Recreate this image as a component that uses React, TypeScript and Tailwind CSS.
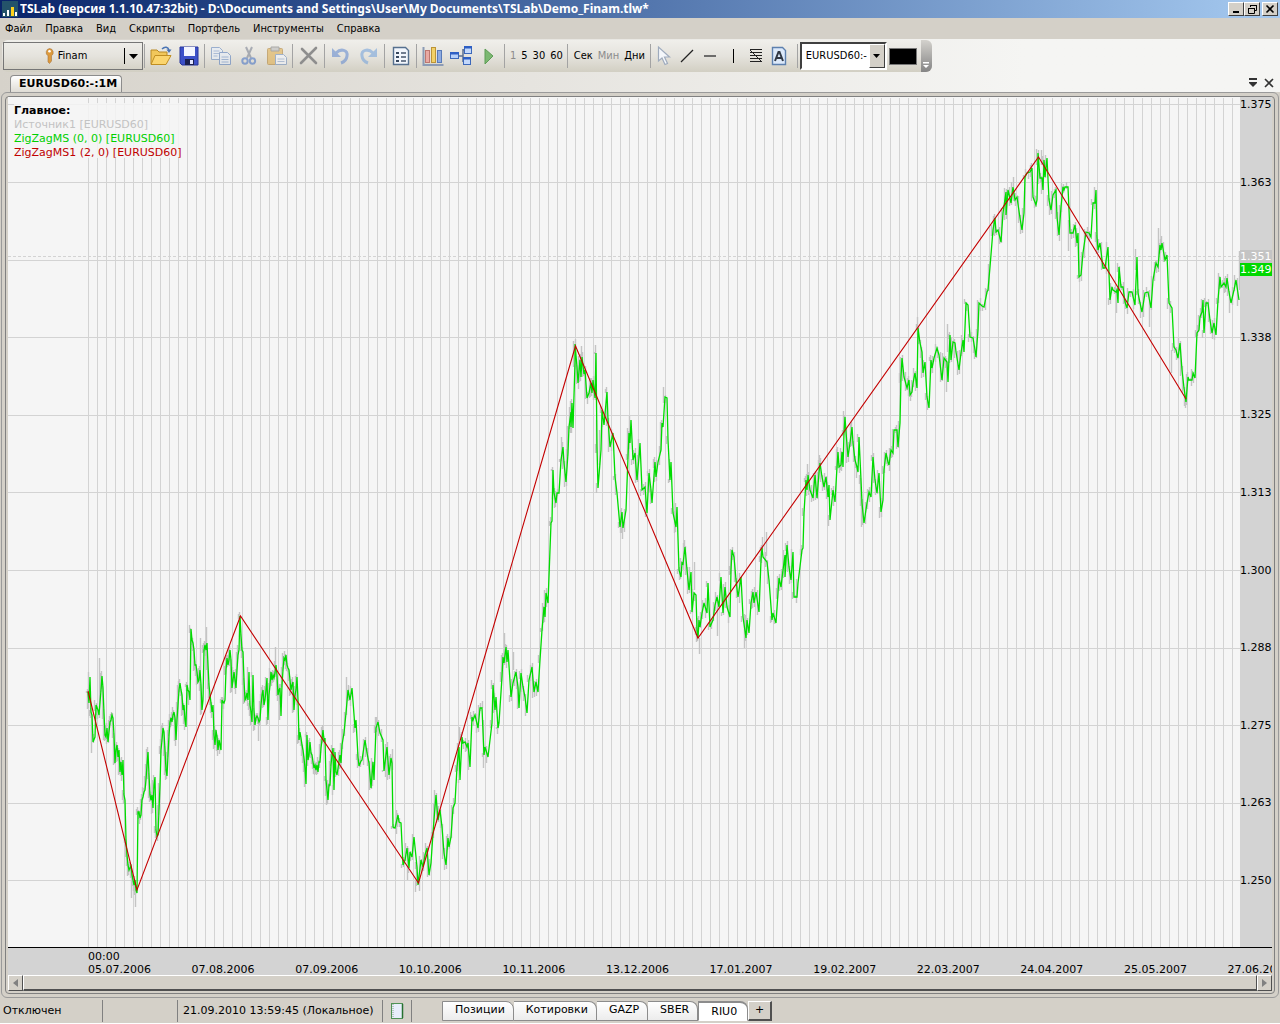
import React from 'react';

const MENU = ['Файл', 'Правка', 'Вид', 'Скрипты', 'Портфель', 'Инструменты', 'Справка'];

const PRICES = ['1.375', '1.363', '', '1.338', '1.325', '1.313', '1.300', '1.288', '1.275', '1.263', '1.250'];

const DATES = [
  '05.07.2006', '07.08.2006', '07.09.2006', '10.10.2006', '10.11.2006', '13.12.2006',
  '17.01.2007', '19.02.2007', '22.03.2007', '24.04.2007', '25.05.2007', '27.06.2007',
];

const SHEETS = ['Позиции', 'Котировки', 'GAZP', 'SBER', 'RIU0'];

const GRID_Y = [104, 182, 260, 337, 415, 492, 570, 648, 725, 803, 880];
const GRID_X = Array.from({ length: 128 }, (_, i) => 88 + i * 9 + (i >= 17 ? 1 : 0));

// x,y pairs of the close price
const SERIES = `88,692 89,703 90,677 91,712 92,715 93,742 95,737 96,705 98,710 99,715 101,690 102,676 103,688 104,713 105,735 106,737 107,728
108,742 110,722 111,720 112,715 113,718 114,735 115,763 116,750 117,745 118,757 119,750 120,772 121,762 122,775 123,760 124,795 125,800
126,840 127,855 128,865 129,870 130,868 131,866 132,875 133,880 134,885 135,880 136,890 137,893 138,812 139,812 140,818 141,815 142,800
143,797 144,792 145,790 146,780 147,765 148,752 149,775 150,795 151,800 152,795 153,808 154,785 155,777 156,830 157,836 158,835 159,810
160,785 161,750 162,740 163,728 164,732 165,750 166,770 167,776 168,755 169,735 170,722 171,718 172,722 173,715 174,712 175,718 176,740
177,720 178,705 179,690 180,683 181,690 182,695 183,710 184,705 185,720 186,727 187,685 188,690 189,692 190,700 191,629 192,640 193,643
194,650 195,665 196,665 197,672 198,682 199,680 200,670 201,685 202,710 203,700 204,650 205,645 206,650 207,643 208,665 209,685 210,695
211,703 212,712 213,705 214,735 215,745 216,730 217,737 218,750 219,740 220,745 221,750 222,700 223,702 224,703 225,700 226,670 227,658
228,665 229,660 230,650 231,660 232,688 233,680 234,672 235,680 236,688 237,670 238,655 239,650 240,616 241,635 242,650 243,652 244,680
245,700 246,698 247,693 248,700 249,672 250,705 251,712 252,722 253,675 254,710 255,725 256,718 257,716 258,718 259,722 260,720 261,705
262,695 263,690 264,705 265,700 266,690 267,678 268,720 269,695 270,685 271,672 272,680 273,675 274,678 275,673 276,665 277,675 278,695
279,690 280,688 281,716 282,685 283,670 284,658 285,660 286,655 287,665 288,668 289,670 290,680 291,690 292,685 293,682 294,710 295,695
296,690 297,677 298,700 299,740 300,732 301,738 302,745 303,750 304,758 305,768 306,784 307,735 308,760 309,755 310,742 311,753 312,755
313,762 314,768 315,765 316,770 317,765 318,772 319,762 320,762 321,748 322,740 323,730 324,740 325,738 326,780 327,790 328,800 329,785
330,785 331,765 332,755 333,748 334,790 335,752 336,772 337,775 340,755 341,763 342,745 344,733 346,713 348,690 350,700 352,688 355,728
356,720 358,757 359,766 361,761 362,760 365,740 367,753 369,763 371,788 373,762 374,780 376,728 378,722 380,733 383,740 384,771 387,747
389,775 391,758 392,763 393,827 395,828 398,815 399,822 401,823 403,865 405,860 407,848 409,868 410,852 412,857 414,837 417,867 418,885
421,860 423,867 425,855 427,848 429,875 431,863 433,833 435,807 436,795 438,820 440,810 442,827 444,853 446,865 448,838 449,847 451,837
453,808 455,803 457,767 459,747 460,780 462,737 463,743 465,742 467,747 468,743 470,767 472,717 473,720 475,715 478,728 480,708 482,708
484,755 485,747 488,757 492,723 493,685 495,710 496,697 498,728 499,723 502,677 503,657 504,663 506,647 507,662 508,650 511,697 513,683
516,672 518,687 519,708 521,673 523,687 525,697 527,713 529,680 532,667 534,692 536,682 538,692 540,660 542,630 544,607 545,617 546,593
548,603 551,523 552,521 553,470 554,493 556,503 557,493 559,493 561,460 563,447 564,463 566,482 568,453 569,427 571,412 571,427 572,403
573,428 575,363 575,344 577,367 578,383 580,360 581,377 582,357 584,374 585,370 587,398 589,393 591,383 592,393 593,380 595,398 596,353
597,447 598,488 601,450 602,410 604,425 607,392 608,420 610,447 613,433 615,477 617,493 620,527 622,512 623,528 626,510 628,457 629,433
630,443 631,420 633,460 635,453 637,480 639,457 640,443 642,490 645,487 647,513 649,473 651,490 652,503 655,462 656,477 658,462 661,450
662,423 663,427 665,397 667,398 668,440 670,480 671,462 673,513 676,527 677,507 679,570 681,577 682,563 683,564 685,547 687,570 689,590
691,572 692,612 694,593 696,595 697,630 698,638 699,620 700,627 702,613 704,603 707,613 708,583 710,627 713,620 715,605 717,597 719,607
721,577 723,613 725,587 727,607 730,617 731,570 732,550 734,557 736,580 738,597 741,577 743,617 746,638 747,620 749,633 751,603 753,592
754,603 756,592 759,612 761,560 762,548 763,557 767,562 769,580 772,620 773,613 776,623 778,593 779,578 781,587 783,570 785,555 785,577
787,545 789,567 791,580 793,552 794,597 797,597 798,583 802,550 803,548 804,513 806,480 807,490 808,475 810,490 813,498 815,475 817,498
819,473 820,463 822,477 824,487 826,477 828,497 829,485 830,520 833,490 835,502 837,467 838,452 839,467 841,465 842,452 843,467 844,433
845,417 846,432 848,457 850,443 852,427 853,443 855,460 857,467 858,472 859,437 861,480 862,503 864,523 867,503 869,492 871,497 873,457
875,480 877,493 879,473 881,512 883,500 884,470 886,453 888,462 889,465 891,450 893,453 894,430 897,430 898,447 900,423 901,377 902,358
904,377 907,388 909,380 910,395 912,392 913,383 915,373 917,388 918,328 920,343 922,352 923,373 925,362 927,397 929,408 931,360 932,368
934,358 937,348 939,355 942,380 944,358 947,362 948,382 950,335 951,360 953,342 955,343 956,352 959,370 961,353 963,340 964,352 966,303
968,305 970,337 973,338 975,350 976,357 978,330 979,303 982,306 984,307 987,292 988,290 990,267 993,230 995,218 996,232 998,230 1001,242
1003,213 1006,192 1006,215 1008,190 1011,203 1013,187 1015,200 1017,197 1020,218 1022,230 1024,213 1025,177 1027,173 1030,172 1032,168
1033,197 1036,205 1037,200 1038,153 1040,178 1042,178 1043,190 1044,160 1045,177 1047,158 1049,200 1051,210 1053,195 1056,190 1057,217
1059,235 1061,207 1063,187 1064,190 1065,187 1068,187 1070,233 1073,233 1075,225 1077,243 1078,233 1079,277 1081,275 1083,253 1086,232
1089,233 1091,237 1093,203 1095,203 1096,190 1097,237 1098,250 1100,243 1103,268 1105,268 1108,247 1110,300 1112,287 1113,290 1116,292
1117,290 1118,303 1119,267 1121,287 1123,287 1125,302 1127,308 1129,292 1132,292 1135,305 1137,257 1138,293 1140,303 1142,312 1145,293
1148,292 1151,308 1153,280 1156,263 1158,267 1160,245 1161,250 1162,243 1165,260 1167,255 1169,303 1172,308 1174,347 1176,350 1178,358
1180,343 1182,370 1184,388 1186,402 1188,377 1189,380 1192,380 1193,373 1195,378 1197,333 1199,330 1200,317 1202,312 1203,300 1204,333
1206,303 1208,303 1210,320 1212,333 1214,323 1216,335 1218,300 1220,277 1221,287 1224,283 1226,287 1227,278 1229,292 1231,303 1234,290
1236,280 1239,300`;

const POINTS = SERIES.trim().split(/\s+/).map((p) => p.split(',').map(Number));

// High/low range of every bar
const BARS = POINTS.map(([x, y], i) => {
  const prev = i > 0 ? POINTS[i - 1][1] : y;
  const near = Math.abs(prev - y) < 30 ? prev : y;
  const top = Math.min(y, near) - 1 - ((i * 7) % 5);
  const bottom = Math.max(y, near) + 1 + ((i * 11) % 6);
  return `M${x - 1.5} ${top}V${bottom}`;
}).join('');

const SPIKES =
  'M99.5 658V700M91.5 725V753M135.5 890V907M131.5 875V898M190.5 628V680M206.5 627V650M200.5 638V670M258.5 722V741M275.5 647V665M346.5 677V705M375.5 717V740M392.5 749V770M415.5 880V892M407.5 860V880M459.5 727V740M482.5 701V708M483.5 720V768M504.5 633V650M513.5 652V670M561.5 437V460M581.5 346V365M595.5 345V400M596.5 420V453M599.5 430V465M622.5 525V539M663.5 387V400M684.5 540V550M694.5 562V590M699.5 638V654M717.5 610V636M744.5 638V648M762.5 537V550M766.5 532V556M807.5 464V475M819.5 455V465M843.5 411V420M861.5 500V527M917.5 317V335M947.5 324V352M946.5 365V392M1013.5 177V190M1036.5 149V165M1041.5 150V165M1068.5 220V251M1079.5 260V282M1116.5 300V313M1158.5 228V250M1161.5 236V248M1171.5 350V373M1149.5 305V327M1135.5 249V270M1185.5 395V408M1229.5 295V313M1239.5 251V290';

const Separator: React.FC = () => <span className="mx-px h-6 w-0.5 shrink-0 border-l border-[#a3a3a3]" />;

const ToolButton: React.FC<{ label: string; narrow?: boolean; children: React.ReactNode }> = ({ label, narrow, children }) => (
  <button aria-label={label} title={label} className={`flex h-7 shrink-0 items-center justify-center ${narrow ? 'w-[23px]' : 'w-7'}`}>
    {children}
  </button>
);

const Icon: React.FC<{ children: React.ReactNode; faded?: boolean }> = ({ children, faded }) => (
  <svg viewBox="0 0 22 22" fill="none" className={`h-[22px] w-[22px] ${faded ? 'opacity-55' : ''}`}>{children}</svg>
);

const TitleBar: React.FC = () => (
  <header className="flex h-[18px] shrink-0 items-center bg-linear-to-r from-[#0a246a] to-[#a6caf0] pr-[2px] pl-[2px] text-white">
    <svg viewBox="0 0 16 16" className="mr-0.5 h-4 w-4">
      <rect width="16" height="16" fill="#24536a" />
      <path d="M1 12h2v3H1zM5 9h2v6H5zM13 11h2v4h-2z" fill="#fff" />
      <path d="M9 6h3v9H9z" fill="#ffd21c" />
    </svg>
    <h1 className="flex-1 truncate font-['Noto_Sans','DejaVu_Sans',sans-serif] text-[12px] leading-4 font-bold">
      TSLab (версия 1.1.10.47:32bit) - D:\Documents and Settings\User\My Documents\TSLab\Demo_Finam.tlw*
    </h1>
    <div className="flex text-black">
      {['Свернуть', 'Восстановить', 'Закрыть'].map((name, i) => (
        <button
          key={name}
          aria-label={name}
          className={`flex h-[14px] w-4 items-center justify-center border border-t-white border-r-[#404040] border-b-[#404040] border-l-white bg-[#d4d0c8] ${i === 2 ? 'ml-0.5' : ''}`}
        >
          <svg viewBox="0 0 12 10" className="h-[10px] w-3 shrink-0" fill="none" stroke="currentColor">
            {i === 0 && <path d="M3 8h6" strokeWidth="2" />}
            {i === 1 && <path d="M4.500 3V1.500H10.500V6.500H8.500M4 1.500H11M2.500 4.500H8.500V9.500H2.500zM2 4.500H9" />}
            {i === 2 && <path d="M2.500 1.500l7 7M9.500 1.500l-7 7" strokeWidth="1.600" />}
          </svg>
        </button>
      ))}
    </div>
  </header>
);

const Toolbar: React.FC = () => (
  <div className="flex h-[34px] shrink-0 items-center pl-0.5 font-['DejaVu_Sans_Condensed','DejaVu_Sans',sans-serif] text-[11px]">
    <div className="flex h-8 items-center rounded-md bg-linear-to-b from-[#f0efeb] via-[#e5e3dd] to-[#d2cfc3] pl-px">
      <div className="flex h-7 w-[140px] items-center border border-[#767676]">
        <button className="flex flex-1 items-center justify-center gap-1 pl-1">
          <svg viewBox="0 0 9 16" className="h-4 w-[9px]">
            <path d="M4.500.5a4 4 0 0 1 2 7.300V13l-2 2.500-1.500-1.500V7.800a4 4 0 0 1 1.500-7.300z" fill="#dd9a3c" stroke="#a8743a" strokeWidth=".6" />
            <circle cx="4.500" cy="3.200" r="1.300" fill="#fff" />
          </svg>
          Finam
        </button>
        <button aria-label="Поставщики данных" className="flex h-4 w-[18px] items-center justify-center border-l border-black">
          <svg viewBox="0 0 9 5" className="h-[5px] w-[9px]"><path d="M0 0h9L4.500 5z" /></svg>
        </button>
      </div>
      <Separator />
      <ToolButton label="Открыть">
        <Icon>
          <path d="M1 19V5h6l2 2h8v4" fill="#f1c75b" stroke="#b98a24" />
          <path d="M1 19.500l4-9h16l-5 9z" fill="#fbd56e" stroke="#c08e22" />
          <path d="M12 4c3-3 6-2 7 1" stroke="#4a74b4" strokeWidth="1.500" />
          <path d="M16.500 4.500h5L19 8z" fill="#4a74b4" />
        </Icon>
      </ToolButton>
      <ToolButton label="Сохранить">
        <Icon>
          <path d="M2 2h18v18H4l-2-2z" fill="#3c50c8" stroke="#27349a" />
          <path d="M6 2h11v9H6z" fill="#f3f5ff" />
          <path d="M7 14h9v6H7z" fill="#1a2050" />
          <path d="M12 15h3v4h-3z" fill="#e0e4ff" />
        </Icon>
      </ToolButton>
      <Separator />
      <ToolButton label="Копировать">
        <Icon faded>
          <path d="M1.500 2.500h8l3 3v9h-11z" fill="#e6eefb" stroke="#5b81bd" />
          <path d="M3.500 6h6M3.500 8.500h6M3.500 11h4" stroke="#7b9bd0" />
          <path d="M9.500 7.500h8l3 3v9h-11z" fill="#e6eefb" stroke="#4c76ba" />
          <path d="M11.500 12h7M11.500 14.500h7M11.500 17h7" stroke="#6c90cc" />
        </Icon>
      </ToolButton>
      <ToolButton label="Вырезать">
        <Icon faded>
          <path d="M8 2l5 11M14 2L9 13" stroke="#737b8c" strokeWidth="2" />
          <circle cx="7" cy="16" r="2.700" stroke="#3f6ec4" strokeWidth="2" />
          <circle cx="14.500" cy="16" r="2.700" stroke="#3f6ec4" strokeWidth="2" />
        </Icon>
      </ToolButton>
      <ToolButton label="Вставить">
        <Icon faded>
          <rect x="1.500" y="3.500" width="15" height="16" rx="1" fill="#e0ab45" stroke="#ac7a28" />
          <path d="M5 2h8v4H5z" fill="#b8b8b8" stroke="#777" />
          <path d="M9.500 9.500h8l3 3v7h-11z" fill="#f5f8ff" stroke="#6888b8" />
          <path d="M11.500 14h7M11.500 16.500h7" stroke="#8ba5ce" />
        </Icon>
      </ToolButton>
      <Separator />
      <ToolButton label="Удалить">
        <Icon><path d="M4 4l14 14M18 3L3 18" stroke="#8e8e8e" strokeWidth="2.600" strokeLinecap="round" /></Icon>
      </ToolButton>
      <Separator />
      <ToolButton label="Отменить">
        <Icon faded>
          <path d="M6 8c5-5 12-3 11 3-.5 4-3 6-6 7" stroke="#5d86cf" strokeWidth="3" />
          <path d="M2 3v9h9z" fill="#5d86cf" />
        </Icon>
      </ToolButton>
      <ToolButton label="Повторить">
        <Icon faded>
          <path d="M15 8C10 3 3 5 4 11c.5 4 3 6 6 7" stroke="#6fa0dc" strokeWidth="3" />
          <path d="M19 3v9h-9z" fill="#6fa0dc" />
        </Icon>
      </ToolButton>
      <Separator />
      <ToolButton label="Свойства">
        <Icon>
          <path d="M3.500 2.500h12l3 3v14h-15z" fill="#f2f6fc" stroke="#56708f" strokeWidth="1.400" />
          <path d="M6 7h3v2H6zM6 11h3v2H6zM6 15h3v2H6z" fill="#37475e" />
          <path d="M11 8h5M11 12h5M11 16h5" stroke="#46566c" strokeWidth="1.400" />
        </Icon>
      </ToolButton>
      <Separator />
      <ToolButton label="График">
        <Icon>
          <path d="M1.500 2v18h20" stroke="#8c9bb5" strokeWidth="2" />
          <rect x="3.500" y="5.500" width="4" height="12" fill="#e9a9a3" stroke="#bd7770" />
          <rect x="9.500" y="2.500" width="4" height="15" fill="#f2d169" stroke="#bc9437" />
          <rect x="15.500" y="5.500" width="4" height="12" fill="#8fabe0" stroke="#587ab8" />
        </Icon>
      </ToolButton>
      <ToolButton label="Схема">
        <Icon>
          <path d="M8 11h5M13 4v13M13 5h3M13 17h3" stroke="#5b6f93" strokeWidth="1.500" />
          <rect x=".5" y="7.500" width="8" height="6" fill="#b6d0fa" stroke="#3c68ba" />
          <rect x="14.500" y="1.500" width="7" height="7" fill="#c3d8fb" stroke="#3c68ba" />
          <rect x="13.500" y="12.500" width="7" height="7" fill="#c3d8fb" stroke="#3c68ba" />
          <path d="M0 7h9v2.500H0zM14 1h8v2.500h-8zM13 12h8v2.500h-8z" fill="#2e5fc4" />
        </Icon>
      </ToolButton>
      <ToolButton label="Запустить">
        <Icon><path d="M7 4l8 7-8 8z" fill="#7cb872" stroke="#5d9c55" /></Icon>
      </ToolButton>
      <Separator />
      <div className="flex gap-[5px] px-[3px]">
        <button className="text-[#8c8c8c]">1</button>
        <button>5</button>
        <button>30</button>
        <button>60</button>
      </div>
      <Separator />
      <div className="flex gap-[5px] px-1">
        <button>Сек</button>
        <button className="text-[#8c8c8c]">Мин</button>
        <button>Дни</button>
      </div>
      <Separator />
      <ToolButton label="Курсор" narrow>
        <Icon><path d="M5.500 2v14l3.500-3 3 6.500 2.500-1-3-6.500h5z" fill="#f4f7fb" stroke="#9fabbd" strokeWidth="1.200" /></Icon>
      </ToolButton>
      <ToolButton label="Линия" narrow>
        <Icon><path d="M5 17L17 5" stroke="#222" strokeWidth="1.200" /></Icon>
      </ToolButton>
      <ToolButton label="Горизонтальная линия" narrow>
        <Icon><path d="M5 11h12" stroke="#444" strokeWidth="1.500" /></Icon>
      </ToolButton>
      <ToolButton label="Вертикальная линия" narrow>
        <Icon><path d="M11.500 4v14" stroke="#000" /></Icon>
      </ToolButton>
      <ToolButton label="Уровни" narrow>
        <Icon><path d="M5 4.500h12M5 7.500h12M5 10.500h12M5 13.500h12M5 16.500h12M5 5l12 12" stroke="#222" /></Icon>
      </ToolButton>
      <ToolButton label="Надпись" narrow>
        <Icon>
          <path d="M4.500 2.500h10l3 3v14h-13z" fill="#dce9fa" stroke="#5d80ae" strokeWidth="1.400" />
          <path d="M7 16l3.500-9h1L15 16M8.500 13h5" stroke="#303844" strokeWidth="2" />
        </Icon>
      </ToolButton>
      <span className="w-[5px]" />
      <Separator />
      <div className="relative h-7 w-[87px] border-2 border-t-[#404040] border-r-white border-b-white border-l-[#404040] bg-white">
        <select aria-label="Инструмент" className="h-full w-full appearance-none bg-white pr-4 pl-1 outline-none">
          <option>EURUSD60:-</option>
        </select>
        <span className="pointer-events-none absolute inset-y-0 right-0 flex w-4 items-center justify-center border border-t-white border-r-[#404040] border-b-[#404040] border-l-white bg-[#d4d0c8]">
          <svg viewBox="0 0 7 4" className="h-1 w-[7px]"><path d="M0 0h7L3.500 4z" /></svg>
        </span>
      </div>
      <button aria-label="Цвет" className="mr-1 ml-0.5 h-[17px] w-7 border border-[#777] bg-black" />
      <button aria-label="Ещё" className="flex h-8 w-[11px] items-end justify-center rounded-r-md bg-linear-to-b from-[#d4d2cd] to-[#858585] pb-1">
        <svg viewBox="0 0 6 6" className="h-1.5 w-1.5"><path d="M0 0h6v1.500H0zM0 3h6L3 6z" fill="#fff" /></svg>
      </button>
    </div>
  </div>
);

const Chart: React.FC = () => (
  <div className="relative min-h-0 min-w-0 flex-1 bg-[#f5f5f5]">
    <svg viewBox="8 97 1232 850" preserveAspectRatio="none" className="absolute inset-0 h-full w-full" fill="none">
      <g stroke="#d3d3d3" shapeRendering="crispEdges">
        {GRID_X.map((x) => <path key={x} d={`M${x + 0.5} 98V947`} />)}
        {GRID_Y.map((y) => <path key={y} d={`M8 ${y + 0.5}H1240`} />)}
        <path d="M8 256.500H1240" strokeDasharray="3 2" />
      </g>
      <rect x="14" y="103" width="173" height="55" fill="#f5f5f5" fillOpacity=".85" />
      <path d={BARS + SPIKES} stroke="#c4c4c4" strokeWidth="1.400" />
      <polyline points={SERIES} stroke="#00dc00" strokeWidth="1.300" />
      <polyline points="88,691 137,890 240.500,616 418.500,883 575.500,346 698,638 1038.500,157 1186,399" stroke="#c40000" strokeWidth="1.100" />
    </svg>
    <ul className="relative pt-[7px] pl-1.5 leading-[14px]">
      <li className="font-bold text-black">Главное:</li>
      <li className="text-[#c3c3c3]">Источник1 [EURUSD60]</li>
      <li className="text-[#00d000]">ZigZagMS (0, 0) [EURUSD60]</li>
      <li className="text-[#c00000]">ZigZagMS1 (2, 0) [EURUSD60]</li>
    </ul>
  </div>
);

const ScrollButton: React.FC<{ label: string; d: string }> = ({ label, d }) => (
  <button aria-label={label} className="flex w-[15px] items-center justify-center border border-t-white border-r-[#505050] border-b-[#505050] border-l-white">
    <svg viewBox="0 0 5 8" className="h-2 w-[5px]"><path d={d} fill="#808080" /></svg>
  </button>
);

const StatusBar: React.FC = () => (
  <footer className="flex h-[26px] shrink-0 items-center border-b border-white">
    <span className="w-[99px] pl-[3px] leading-[22px]">Отключен</span>
    <span className="ml-[3px] h-[22px] w-[75px] border-l border-[#808080]" />
    <span className="h-[22px] w-[205px] border-l border-[#808080] pl-[5px] leading-[22px] whitespace-nowrap">21.09.2010 13:59:45 (Локальное)</span>
    <button aria-label="Журнал" className="flex h-[22px] w-[30px] items-center justify-center border-x border-[#808080]">
      <svg viewBox="0 0 14 16" className="h-4 w-3.5">
        <rect x="1.500" y=".5" width="11" height="15" fill="#e8eefb" stroke="#4f9255" />
        <path d="M12.500 1v14" stroke="#267030" strokeWidth="1.500" />
        <path d="M3 1v14" stroke="#b8c8c0" strokeWidth="2" strokeDasharray="1 1" />
      </svg>
    </button>
    <nav className="ml-[30px] flex h-5 items-stretch">
      {SHEETS.map((name) => (
        <button
          key={name}
          className={`rounded-tr-lg border border-[#8c8c8c] pl-3 ${
            name === 'RIU0' ? 'border-t-2 border-b-white bg-white pt-px pr-2.5' : 'border-l-0 bg-linear-to-b from-white to-[#ececec] pr-2 first:border-l'
          }`}
        >
          {name}
        </button>
      ))}
      <button aria-label="Добавить лист" className="w-6 border border-t-white border-r-2 border-r-[#505050] border-b-2 border-b-[#505050] border-l-white bg-[#d4d0c8]">+</button>
    </nav>
  </footer>
);

const App: React.FC = () => (
  <div className="flex h-screen flex-col overflow-hidden bg-[#d4d0c8] font-['DejaVu_Sans',sans-serif] text-[11px] text-black">
    <TitleBar />
    <nav className="flex h-[21px] shrink-0 items-center gap-[13px] pt-0.5 pl-[5px] font-['DejaVu_Sans_Condensed','DejaVu_Sans',sans-serif]">
      {MENU.map((item) => <button key={item}>{item}</button>)}
    </nav>
    <div className="shrink-0 bg-linear-to-r from-[#d6d2ca] to-[#f5f5f3] to-80%">
      <Toolbar />
      <div className="flex h-[19px] items-end justify-between pr-1.5 pl-2.5">
        <button className="flex h-[17px] items-center rounded-t border border-b-0 border-[#8c8c8c] bg-linear-to-b from-white to-[#dfdcd5] pr-1 pl-2 font-bold">
          EURUSD60:-:1M
        </button>
        <div className="flex h-full items-center gap-1.5">
          <button aria-label="Список окон">
            <svg viewBox="0 0 10 9" className="h-[9px] w-2.5"><path d="M1 0h8v2H1zM1 4h8v1L5 9 1 5z" fill="#333" /></svg>
          </button>
          <button aria-label="Закрыть вкладку">
            <svg viewBox="0 0 10 10" className="h-2.5 w-2.5" stroke="#333" strokeWidth="1.600"><path d="M1 1l8 8M9 1L1 9" /></svg>
          </button>
        </div>
      </div>
    </div>
    <main className="mx-px flex min-h-0 flex-1 flex-col rounded-md border border-[#9a9a9a] p-[3px]">
      <div className="flex min-h-0 flex-1 flex-col rounded-sm border border-[#808080] px-0.5 pb-0.5">
        <div className="flex min-h-0 flex-1">
          <Chart />
          <div className="relative flex w-8 shrink-0 flex-col justify-between bg-[#d3d3d3] pt-px pb-[59px] leading-[14px]">
            {PRICES.map((price) => <span key={price} className="h-[14px]">{price}</span>)}
            <div className="absolute top-[18%] left-0 w-full text-white">
              <p className="bg-[#c4c4c4] leading-[13px]">1.351</p>
              <p className="bg-[#00d800] leading-[13px]">1.349</p>
            </div>
          </div>
        </div>
        <div className="h-7 shrink-0 overflow-hidden border-t border-black bg-[#d3d3d3] pt-0.5 pl-20 leading-[13px]">
          <p>00:00</p>
          <div className="flex">
            {DATES.map((date) => <span key={date} className="shrink-0 basis-[8.75%]">{date}</span>)}
          </div>
        </div>
        <div className="flex h-4 shrink-0 bg-[#d4d0c8]">
          <ScrollButton label="Прокрутить влево" d="M5 0v8L0 4z" />
          <div className="flex-1 border border-t-white border-r-[#505050] border-b-2 border-b-[#505050] border-l-white" />
          <ScrollButton label="Прокрутить вправо" d="M0 0v8l5-4z" />
        </div>
      </div>
    </main>
    <StatusBar />
  </div>
);

export default App;
